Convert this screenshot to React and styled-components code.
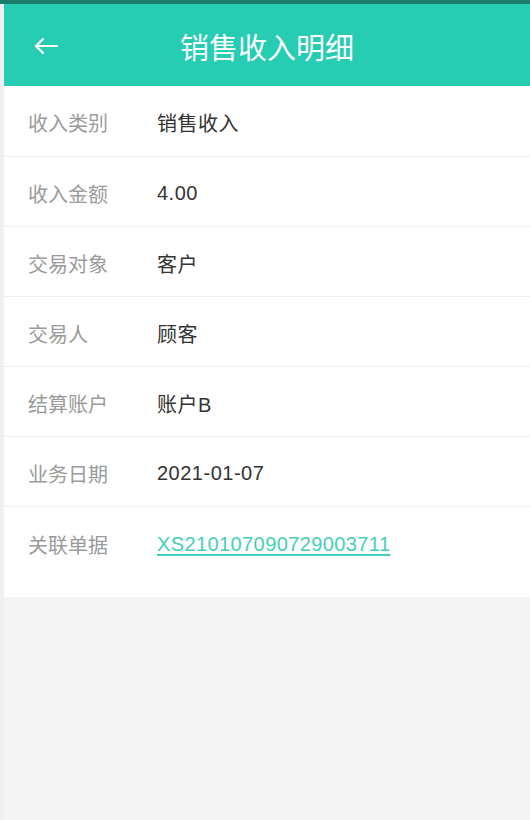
import React from "react";
import styled, { createGlobalStyle } from "styled-components";

const GlobalStyle = createGlobalStyle`
    html, body {
        margin: 0;
        padding: 0;
        background: #f4f4f4;
        font-family: "Liberation Sans", "Noto Sans CJK SC", sans-serif;
    }
`;

const Page = styled.div`
    min-height: 820px;
    display: flex;
    flex-direction: column;
`;

const StatusBar = styled.div`
    height: 4px;
    background: #1b7c69;
`;

const Body = styled.div`
    flex: 1;
    padding-left: 4px;
    background: #efefef;
    display: flex;
    flex-direction: column;
`;

const Main = styled.div`
    flex: 1;
    background: #f4f4f4;
`;

const Header = styled.header`
    height: 82px;
    background: #26cdb2;
    display: grid;
    grid-template-columns: 82px 1fr 82px;
    align-items: center;
`;

const BackButton = styled.div`
    display: flex;
    align-items: center;
    padding-left: 30px;
    padding-top: 2px;
`;

const Title = styled.h1`
    margin: 0;
    text-align: center;
    color: #fff;
    font-size: 29px;
    font-weight: normal;
    padding-top: 2px;
`;

const List = styled.div`
    background: #fff;
    padding-bottom: 21px;
`;

const Row = styled.div`
    height: 70px;
    display: flex;
    align-items: center;
    border-top: ${props => props.first ? "none" : "1px solid #efefef"};
    box-sizing: border-box;
    padding: ${props => props.last ? "6px" : "3px"} 0 0 24px;
    font-size: 20px;
`;

const Label = styled.span`
    width: 129px;
    color: #9a9a9a;
`;

const Value = styled.span`
    color: #333;
    letter-spacing: 0.5px;
`;

const DocLink = styled.a`
    color: #45cfba;
    letter-spacing: 0.4px;
    text-decoration: underline;
    text-underline-offset: 3px;
`;

const rows = [
    ["收入类别", "销售收入"],
    ["收入金额", "4.00"],
    ["交易对象", "客户"],
    ["交易人", "顾客"],
    ["结算账户", "账户B"],
    ["业务日期", "2021-01-07"],
];

const BackArrow = () => (
    <svg width="24" height="18" viewBox="0 0 24 18" fill="none" stroke="#fff" strokeWidth="2.2" strokeLinecap="round" strokeLinejoin="round">
        <path d="M23 9H2" />
        <path d="M9 2L2 9l7 7" />
    </svg>
);

export default function App() {
    return (
        <Page>
            <GlobalStyle />
            <StatusBar />
            <Body>
                <Header>
                    <BackButton><BackArrow /></BackButton>
                    <Title>销售收入明细</Title>
                    <div />
                </Header>
                <Main>
                    <List>
                        {rows.map(([label, value], i) => (
                            <Row key={label} first={i === 0}>
                                <Label>{label}</Label>
                                <Value>{value}</Value>
                            </Row>
                        ))}
                        <Row last>
                            <Label>关联单据</Label>
                            <DocLink>XS210107090729003711</DocLink>
                        </Row>
                    </List>
                </Main>
            </Body>
        </Page>
    );
}
